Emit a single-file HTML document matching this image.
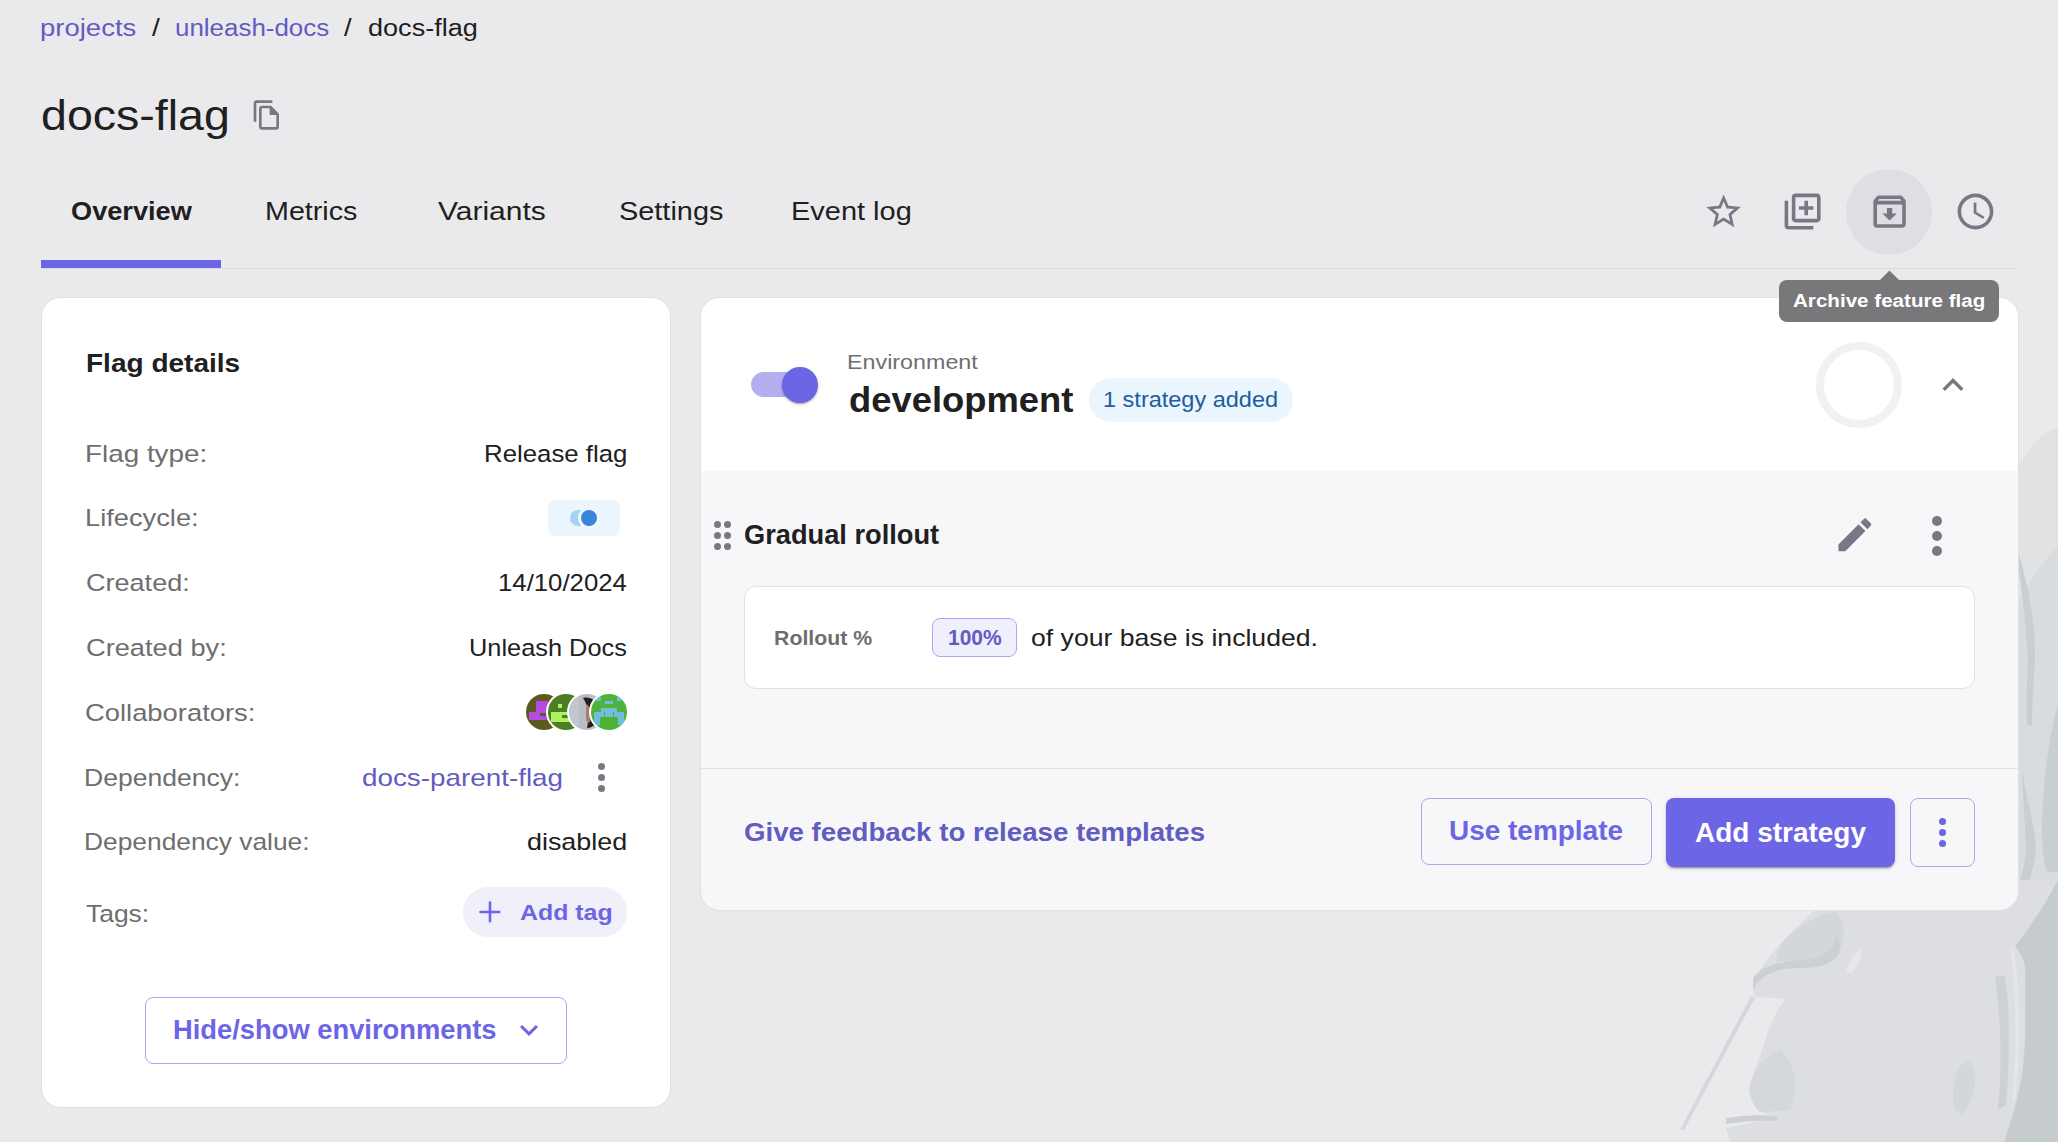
<!DOCTYPE html>
<html><head><meta charset="utf-8"><title>docs-flag</title>
<style>
html,body{margin:0;padding:0}
body{width:2058px;height:1142px;overflow:hidden;background:#EAEAED;position:relative;font-family:"Liberation Sans",sans-serif}
.t{position:absolute;white-space:nowrap;transform-origin:0 0;}
.ab{position:absolute;box-sizing:border-box}
.ic{position:absolute;display:block}
</style></head><body>
<svg class="ic" style="left:1600px;top:400px;width:458px;height:742px" viewBox="1600 400 458 742">
<path fill="#E0E2E4" d="M2018 468 C2030 445 2045 430 2058 427 L2058 880 L2018 880 Z"/>
<path fill="#D9DCDF" d="M2018 600 C2030 580 2045 560 2058 545 L2058 880 L2018 880 Z"/>
<path fill="#C9CED1" d="M2019 555 C2028 585 2036 625 2035 660 C2033 690 2032 710 2032 725 L2027 725 C2026 700 2027 680 2028 660 C2026 625 2022 590 2019 572 Z"/>
<path fill="#C9CED1" d="M2022 770 C2027 800 2036 830 2036 850 C2032 880 2022 900 2013 918 L2011 913 C2016 890 2025 870 2026 850 C2025 820 2023 800 2022 770 Z"/>
<path fill="#C9CED1" d="M2058 705 C2049 735 2043 780 2042 825 C2042 850 2044 865 2047 872 L2058 872 Z"/>
<path fill="#DCDEE1" d="M1838 880 L2058 880 L2058 1142 L1730 1142 L1726 1128 C1745 1124 1765 1120 1777 1118 L1760 1112 C1752 1105 1748 1092 1750 1084 C1755 1070 1762 1050 1768 1031 C1773 1018 1780 1005 1786 999 L1755 997 C1752 990 1753 982 1760 970 C1770 955 1790 932 1819 906 L1838 880 Z"/>
<path fill="#D3D7DA" d="M1780 945 C1795 928 1815 915 1835 912 C1846 922 1846 940 1838 952 C1825 958 1800 960 1776 962 Z"/>
<path fill="#CBD0D3" d="M1753 990 C1760 975 1775 968 1800 968 C1815 968 1830 966 1838 955 C1842 948 1840 940 1836 935 C1835 950 1825 958 1800 960 C1780 962 1762 965 1753 978 Z"/>
<path fill="#E6E7EA" d="M1846 970 C1850 958 1857 950 1862 947 C1863 958 1857 967 1851 974 Z"/>
<path fill="#D4D8DB" d="M1751 996 L1755 998 L1684 1130 L1680 1130 Z"/>
<path fill="#CBD0D3" d="M1726 1118 C1745 1115 1765 1114 1778 1117 L1777 1121 C1760 1120 1742 1121 1726 1124 Z"/>
<path fill="#D5D8DB" d="M1750 1084 C1755 1068 1765 1055 1780 1050 C1795 1060 1800 1090 1790 1110 L1760 1112 C1752 1105 1748 1092 1750 1084 Z"/>
<path fill="#D4D7DA" d="M1955 1110 C1950 1090 1955 1060 1970 1062 C1980 1070 1975 1100 1962 1115 Z"/>
<path fill="#C6CBCE" d="M2058 880 C2045 905 2028 930 2015 946 C2022 955 2025 962 2025 967 L2025 1040 C2024 1060 2022 1080 2020 1086 C2015 1110 2008 1130 2004 1142 L2058 1142 Z"/>
<path fill="#E4E6E8" d="M2010 950 C2016 990 2018 1050 2012 1100 L2015 1100 C2021 1050 2020 990 2014 950 Z"/>
<path fill="#CDD1D4" d="M1995 976 C2000 1010 2003 1060 1998 1110 L2006 1105 C2010 1060 2010 1010 2005 976 Z"/>
</svg>
<span class="t" style="left:40.17px;top:16.00px;font-size:24.69px;line-height:24.69px;transform:scaleX(1.1143);color:#615BC2;">projects</span><span class="t" style="left:152.00px;top:16.00px;font-size:24.69px;line-height:24.69px;transform:scaleX(1.1429);color:#202021;">/</span><span class="t" style="left:174.70px;top:16.00px;font-size:24.69px;line-height:24.69px;transform:scaleX(1.0500);color:#615BC2;">unleash-docs</span><span class="t" style="left:344.20px;top:16.00px;font-size:24.69px;line-height:24.69px;transform:scaleX(1.1143);color:#202021;">/</span><span class="t" style="left:367.90px;top:16.00px;font-size:24.69px;line-height:24.69px;transform:scaleX(1.0969);color:#202021;">docs-flag</span><span class="t" style="left:40.89px;top:95.20px;font-size:42.07px;line-height:42.07px;transform:scaleX(1.1066);color:#202021;">docs-flag</span><span class="t" style="left:70.78px;top:198.10px;font-size:26.60px;line-height:26.60px;transform:scaleX(1.0214);color:#202021;font-weight:700;">Overview</span><span class="t" style="left:264.71px;top:198.00px;font-size:26.16px;line-height:26.16px;transform:scaleX(1.0963);color:#202021;">Metrics</span><span class="t" style="left:437.80px;top:198.00px;font-size:26.16px;line-height:26.16px;transform:scaleX(1.1462);color:#202021;">Variants</span><span class="t" style="left:618.68px;top:199.00px;font-size:25.87px;line-height:25.87px;transform:scaleX(1.1174);color:#202021;">Settings</span><span class="t" style="left:791.06px;top:199.00px;font-size:25.87px;line-height:25.87px;transform:scaleX(1.1202);color:#202021;">Event log</span>
<div class="ab" style="left:41px;top:268px;width:1977px;height:1px;background:#DCDCE0"></div>
<div class="ab" style="left:41px;top:260px;width:180px;height:8px;background:#6C65E5"></div>
<svg class="ic" style="left:251.00px;top:99.00px;width:32.00px;height:32.00px" viewBox="0 0 24 24"><path fill="#787784" d="M16 1H4c-1.1 0-2 .9-2 2v14h2V3h12V1zm-1 4H8c-1.1 0-1.99.9-1.99 2L6 21c0 1.1.89 2 1.99 2H19c1.1 0 2-.9 2-2V11l-6-6zM8 21V7h6v5h5v9H8z"/></svg><div class="ab" style="left:1846.25px;top:169.25px;width:85.5px;height:85.5px;border-radius:50%;background:#DFDEE3"></div><svg class="ic" style="left:1702.90px;top:190.80px;width:41.30px;height:41.30px" viewBox="0 0 24 24"><path fill="#787784" d="M22 9.24l-7.19-.62L12 2 9.19 8.63 2 9.24l5.46 4.73L5.82 21 12 17.27 18.18 21l-1.63-7.03L22 9.24zM12 15.4l-3.76 2.27 1-4.28-3.32-2.88 4.38-.38L12 6.1l1.71 4.04 4.38.38-3.32 2.88 1 4.28L12 15.4z"/></svg><svg class="ic" style="left:1780.90px;top:189.50px;width:43.20px;height:43.20px" viewBox="0 0 24 24"><path fill="#787784" d="M4 6H2v14c0 1.1.9 2 2 2h14v-2H4V6zm16-4H8c-1.1 0-2 .9-2 2v12c0 1.1.9 2 2 2h12c1.1 0 2-.9 2-2V4c0-1.1-.9-2-2-2zm0 14H8V4h12v12zm-7-2h2v-3h3V9h-3V6h-2v3h-3v2h3z"/></svg><svg class="ic" style="left:1867.80px;top:189.60px;width:43.20px;height:43.20px" viewBox="0 0 24 24"><path fill="#787784" d="M20.54 5.23l-1.39-1.68C18.88 3.21 18.47 3 18 3H6c-.47 0-.88.21-1.16.55L3.46 5.23C3.17 5.57 3 6.02 3 6.5V19c0 1.1.9 2 2 2h14c1.1 0 2-.9 2-2V6.5c0-.48-.17-.93-.46-1.27zM6.24 5h11.52l.81.97H5.44l.8-.97zM5 19V8h14v11H5zm8.45-9h-2.9v3H8l4 4 4-4h-2.55z"/></svg><svg class="ic" style="left:1954.20px;top:189.50px;width:43.00px;height:43.00px" viewBox="0 0 24 24"><path fill="#787784" d="M11.99 2C6.47 2 2 6.48 2 12s4.47 10 9.99 10C17.52 22 22 17.52 22 12S17.52 2 11.99 2zM12 20c-4.42 0-8-3.58-8-8s3.58-8 8-8 8 3.58 8 8-3.58 8-8 8zm.5-13H11v6l5.25 3.15.75-1.23-4.5-2.67z"/></svg>
<div class="ab" style="left:41px;top:297px;width:630px;height:811px;background:#fff;border:1px solid #E1E1E3;border-radius:20px"></div>
<div class="ab" style="left:700px;top:297px;width:1319px;height:614px;background:#F7F7FA;border:1px solid #E1E1E3;border-radius:20px;overflow:hidden">
  <div class="ab" style="left:0;top:0;width:100%;height:173px;background:#fff"></div>
  <div class="ab" style="left:0;top:470px;width:100%;height:1px;background:#E1E1E3"></div>
</div>
<div class="ab" style="left:750.7px;top:372px;width:66px;height:25px;border-radius:12.5px;background:#B4B0F0"></div><div class="ab" style="left:781.8px;top:367px;width:36px;height:36px;border-radius:50%;background:#6C65E5;box-shadow:0 2px 2px -1px rgba(0,0,0,.2),0 1px 2px 0 rgba(0,0,0,.14),0 1px 4px 0 rgba(0,0,0,.12)"></div><div class="ab" style="left:1816px;top:342.2px;width:86px;height:86px;border-radius:50%;border:8.7px solid #F1F1F4"></div><svg class="ic" style="left:1931.50px;top:363.70px;width:42.00px;height:42.00px" viewBox="0 0 24 24"><path fill="#787784" d="M12 8l-6 6 1.41 1.41L12 10.83l4.59 4.58L18 14z"/></svg><div class="ab" style="left:1089px;top:378px;width:204px;height:44px;border-radius:22px;background:#EAF5FE"></div><div class="ab" style="left:713.70px;top:520.70px;width:7.20px;height:7.20px;border-radius:50%;background:#787784"></div><div class="ab" style="left:713.70px;top:531.80px;width:7.20px;height:7.20px;border-radius:50%;background:#787784"></div><div class="ab" style="left:713.70px;top:542.60px;width:7.20px;height:7.20px;border-radius:50%;background:#787784"></div><div class="ab" style="left:724.20px;top:520.70px;width:7.20px;height:7.20px;border-radius:50%;background:#787784"></div><div class="ab" style="left:724.20px;top:531.80px;width:7.20px;height:7.20px;border-radius:50%;background:#787784"></div><div class="ab" style="left:724.20px;top:542.60px;width:7.20px;height:7.20px;border-radius:50%;background:#787784"></div><svg class="ic" style="left:1833.40px;top:513.40px;width:43.70px;height:43.70px" viewBox="0 0 24 24"><path fill="#787784" d="M3 17.25V21h3.75L17.81 9.94l-3.75-3.75L3 17.25zM20.71 7.04c.39-.39.39-1.02 0-1.41l-2.34-2.34a.9959.9959 0 0 0-1.41 0l-1.83 1.83 3.75 3.75 1.83-1.83z"/></svg><div class="ab" style="left:1931.80px;top:516.20px;width:10.00px;height:10.00px;border-radius:50%;background:#787784"></div><div class="ab" style="left:1931.80px;top:530.90px;width:10.00px;height:10.00px;border-radius:50%;background:#787784"></div><div class="ab" style="left:1931.80px;top:545.50px;width:10.00px;height:10.00px;border-radius:50%;background:#787784"></div><div class="ab" style="left:744px;top:586px;width:1231px;height:103px;border-radius:12px;background:#fff;border:1px solid #E1E1E3"></div><div class="ab" style="left:932px;top:618px;width:85px;height:39px;border-radius:8px;background:#F0EFFC;border:1px solid #ABA7F4"></div><div class="ab" style="left:1421px;top:798px;width:231px;height:67px;border-radius:8px;border:1px solid #ABA7F4"></div><div class="ab" style="left:1666px;top:798px;width:229px;height:69px;border-radius:8px;background:#6C65E5;box-shadow:0 3px 1px -2px rgba(0,0,0,.2),0 2px 2px 0 rgba(0,0,0,.14),0 1px 5px 0 rgba(0,0,0,.12)"></div><div class="ab" style="left:1910px;top:798px;width:65px;height:69px;border-radius:8px;border:1px solid #ABA7F4"></div><div class="ab" style="left:1938.80px;top:817.70px;width:7.20px;height:7.20px;border-radius:50%;background:#6C65E5"></div><div class="ab" style="left:1938.80px;top:828.90px;width:7.20px;height:7.20px;border-radius:50%;background:#6C65E5"></div><div class="ab" style="left:1938.80px;top:839.70px;width:7.20px;height:7.20px;border-radius:50%;background:#6C65E5"></div><div class="ab" style="left:548px;top:500px;width:72px;height:36px;border-radius:8px;background:#EAF5FE"></div><div class="ab" style="left:570.40px;top:509.80px;width:16.40px;height:16.40px;border-radius:50%;background:#A6D0F4"></div><div class="ab" style="left:578.1px;top:506.8px;width:22.4px;height:22.4px;border-radius:50%;background:#3A84D9;border:3px solid #F0F7FE"></div><div class="ab" style="left:597.90px;top:763.00px;width:7.40px;height:7.40px;border-radius:50%;background:#787784"></div><div class="ab" style="left:597.90px;top:774.00px;width:7.40px;height:7.40px;border-radius:50%;background:#787784"></div><div class="ab" style="left:597.90px;top:784.50px;width:7.40px;height:7.40px;border-radius:50%;background:#787784"></div><div class="ab" style="left:463px;top:887px;width:164px;height:50px;border-radius:25px;background:#F0EFFA"></div><svg class="ic" style="left:478px;top:900px;width:24px;height:24px" viewBox="0 0 24 24"><path d="M2.5 12H21.3M12 2.5V21.3" stroke="#6C65E5" stroke-width="2.6" stroke-linecap="round" fill="none"/></svg><div class="ab" style="left:145px;top:997px;width:422px;height:67px;border-radius:8px;border:1px solid #ABA7F4"></div><svg class="ic" style="left:511.00px;top:1011.80px;width:36.00px;height:36.00px" viewBox="0 0 24 24"><path fill="#6C65E5" d="M16.59 8.59 12 13.17 7.41 8.59 6 10l6 6 6-6z"/></svg><div class="ab" style="left:1779px;top:280px;width:220px;height:42px;border-radius:8px;background:#78787A"></div><svg class="ic" style="left:1877.5px;top:269.5px;width:23px;height:13px" viewBox="0 0 23 13"><path d="M1 11L11.5 0.5 22 11 22 13 1 13z" fill="#78787A"/></svg><svg class="ic" style="left:524.00px;top:692px;width:40px;height:40px" viewBox="-2 -2 40 40"><defs><clipPath id="c526"><circle cx="18" cy="18" r="18"/></clipPath></defs><circle cx="18" cy="18" r="20" fill="#fff"/><g clip-path="url(#c526)"><rect width="36" height="36" fill="#5C5A1F"/><rect x="10" y="7" width="12" height="5" fill="#B54BE2"/><rect x="10" y="12" width="12" height="6" fill="#B54BE2"/><rect x="3" y="18" width="19" height="8" fill="#B54BE2"/><rect x="14" y="19" width="6" height="3" fill="#5C5A1F"/></g></svg><svg class="ic" style="left:545.80px;top:692px;width:40px;height:40px" viewBox="-2 -2 40 40"><defs><clipPath id="c547"><circle cx="18" cy="18" r="18"/></clipPath></defs><circle cx="18" cy="18" r="20" fill="#fff"/><g clip-path="url(#c547)"><rect width="36" height="36" fill="#4D7D24"/><rect x="10" y="10" width="4" height="4" fill="#ADF35E"/><rect x="3" y="18" width="22" height="10" fill="#ADF35E"/><rect x="14" y="21" width="8" height="3" fill="#4D7D24"/><rect x="0" y="1" width="6" height="4" fill="#ADF35E"/></g></svg><svg class="ic" style="left:566.80px;top:692px;width:40px;height:40px" viewBox="-2 -2 40 40"><defs><clipPath id="c568"><circle cx="18" cy="18" r="18"/></clipPath></defs><circle cx="18" cy="18" r="20" fill="#fff"/><g clip-path="url(#c568)"><rect width="36" height="36" fill="#B9BDC6"/><path d="M14 4 C22 2 30 8 31 18 C31 28 24 34 18 34 C20 26 20 12 14 4z" fill="#23201F"/><path d="M17 10 C22 12 23 20 21 28 C19 30 17 28 17 22z" fill="#A87E67"/><rect x="0" y="0" width="10" height="36" fill="#C8CBD2" opacity=".6"/></g></svg><svg class="ic" style="left:588.60px;top:692px;width:40px;height:40px" viewBox="-2 -2 40 40"><defs><clipPath id="c590"><circle cx="18" cy="18" r="18"/></clipPath></defs><circle cx="18" cy="18" r="20" fill="#fff"/><g clip-path="url(#c590)"><rect width="36" height="36" fill="#4EB33A"/><rect x="3" y="3" width="7" height="4" fill="#72BDDD"/><rect x="26" y="3" width="7" height="4" fill="#72BDDD"/><rect x="14" y="7" width="8" height="3" fill="#72BDDD"/><rect x="10" y="14" width="16" height="4" fill="#72BDDD"/><rect x="3" y="18" width="10" height="5" fill="#72BDDD"/><rect x="23" y="18" width="10" height="5" fill="#72BDDD"/><rect x="3" y="23" width="6" height="8" fill="#72BDDD"/><rect x="27" y="23" width="6" height="8" fill="#72BDDD"/><rect x="14" y="18" width="8" height="5" fill="#72BDDD"/></g></svg>
<span class="t" style="left:847.43px;top:352.00px;font-size:20.49px;line-height:20.49px;transform:scaleX(1.1372);color:#6E6E70;">Environment</span><span class="t" style="left:848.67px;top:382.30px;font-size:35.17px;line-height:35.17px;transform:scaleX(1.0343);color:#202021;font-weight:700;">development</span><span class="t" style="left:1103.22px;top:389.20px;font-size:21.57px;line-height:21.57px;transform:scaleX(1.0899);color:#225C9F;">1 strategy added</span><span class="t" style="left:744.49px;top:522.20px;font-size:26.89px;line-height:26.89px;transform:scaleX(1.0130);color:#202021;font-weight:700;">Gradual rollout</span><span class="t" style="left:774.08px;top:628.40px;font-size:20.93px;line-height:20.93px;transform:scaleX(1.0179);color:#6E6E70;font-weight:700;">Rollout %</span><span class="t" style="left:947.92px;top:628.40px;font-size:21.51px;line-height:21.51px;transform:scaleX(0.9755);color:#615BC2;font-weight:700;">100%</span><span class="t" style="left:1031.29px;top:625.90px;font-size:24.00px;line-height:24.00px;transform:scaleX(1.1086);color:#202021;">of your base is included.</span><span class="t" style="left:744.13px;top:820.00px;font-size:25.87px;line-height:25.87px;transform:scaleX(1.0692);color:#615BC2;font-weight:700;">Give feedback to release templates</span><span class="t" style="left:1449.13px;top:818.30px;font-size:27.03px;line-height:27.03px;transform:scaleX(1.0349);color:#6C65E5;font-weight:700;">Use template</span><span class="t" style="left:1694.86px;top:819.50px;font-size:26.89px;line-height:26.89px;transform:scaleX(1.0411);color:#FFFFFF;font-weight:700;">Add strategy</span><span class="t" style="left:85.59px;top:350.30px;font-size:26.60px;line-height:26.60px;transform:scaleX(1.0538);color:#202021;font-weight:700;">Flag details</span><span class="t" style="left:85.41px;top:442.00px;font-size:24.27px;line-height:24.27px;transform:scaleX(1.1471);color:#6E6E70;">Flag type:</span><span class="t" style="left:85.25px;top:505.80px;font-size:24.27px;line-height:24.27px;transform:scaleX(1.1237);color:#6E6E70;">Lifecycle:</span><span class="t" style="left:85.89px;top:570.70px;font-size:24.27px;line-height:24.27px;transform:scaleX(1.1144);color:#6E6E70;">Created:</span><span class="t" style="left:85.88px;top:635.90px;font-size:24.27px;line-height:24.27px;transform:scaleX(1.1221);color:#6E6E70;">Created by:</span><span class="t" style="left:85.27px;top:701.40px;font-size:24.27px;line-height:24.27px;transform:scaleX(1.1277);color:#6E6E70;">Collaborators:</span><span class="t" style="left:84.21px;top:765.90px;font-size:24.27px;line-height:24.27px;transform:scaleX(1.0942);color:#6E6E70;">Dependency:</span><span class="t" style="left:84.23px;top:829.60px;font-size:24.27px;line-height:24.27px;transform:scaleX(1.0858);color:#6E6E70;">Dependency value:</span><span class="t" style="left:86.40px;top:901.80px;font-size:24.27px;line-height:24.27px;transform:scaleX(1.0893);color:#6E6E70;">Tags:</span><span class="t" style="left:484.06px;top:442.10px;font-size:24.13px;line-height:24.13px;transform:scaleX(1.0695);color:#202021;">Release flag</span><span class="t" style="left:497.74px;top:571.30px;font-size:23.84px;line-height:23.84px;transform:scaleX(1.0803);color:#202021;">14/10/2024</span><span class="t" style="left:468.77px;top:635.80px;font-size:23.84px;line-height:23.84px;transform:scaleX(1.0644);color:#202021;">Unleash Docs</span><span class="t" style="left:361.72px;top:766.60px;font-size:23.59px;line-height:23.59px;transform:scaleX(1.1798);color:#615BC2;">docs-parent-flag</span><span class="t" style="left:527.29px;top:830.00px;font-size:24.28px;line-height:24.28px;transform:scaleX(1.1080);color:#202021;">disabled</span><span class="t" style="left:520.30px;top:901.20px;font-size:22.67px;line-height:22.67px;transform:scaleX(1.0988);color:#6C65E5;font-weight:700;">Add tag</span><span class="t" style="left:172.72px;top:1016.20px;font-size:27.62px;line-height:27.62px;transform:scaleX(0.9898);color:#6C65E5;font-weight:700;">Hide/show environments</span><span class="t" style="left:1793.11px;top:292.00px;font-size:18.90px;line-height:18.90px;transform:scaleX(1.0902);color:#FFFFFF;font-weight:700;">Archive feature flag</span>
</body></html>
